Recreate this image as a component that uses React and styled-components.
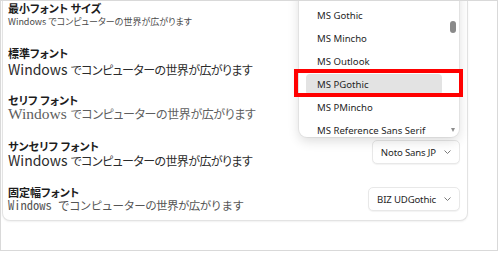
import React from 'react';
import styled, { createGlobalStyle } from 'styled-components';

const Global = createGlobalStyle`
  html, body { margin: 0; padding: 0; background: #fff; }
  body { font-family: "Noto Sans CJK JP", "Noto Sans", sans-serif; }
`;

const Frame = styled.div`
  position: relative;
  box-sizing: border-box;
  width: 498px;
  height: 251px;
  border: 1px solid #d9d9d9;
  background: #fff;
  overflow: hidden;
`;

const Card = styled.div`
  box-sizing: border-box;
  margin: 0 29px 0 1px;
  height: 220px;
  background: #fff;
  border: 1px solid #e3e3e3;
  border-top: none;
  border-radius: 0 0 8px 8px;
  box-shadow: 0 1px 2px rgba(0, 0, 0, 0.06);
  padding: 0 7px 0 5px;
  display: flex;
  flex-direction: column;
`;

const Row = styled.div`
  display: flex;
  align-items: flex-start;
  justify-content: space-between;
  margin-top: ${(p) => p.$top}px;
`;

const TextBlock = styled.div`
  display: flex;
  flex-direction: column;
`;

const Label = styled.div`
  font-family: "Noto Sans CJK JP", sans-serif;
  font-feature-settings: "palt";
  font-size: 11px;
  font-weight: 700;
  line-height: 14px;
  color: #1c1c1c;
  white-space: nowrap;
`;

const Sub = styled.div`
  font-family: "Noto Sans CJK JP", sans-serif;
  font-feature-settings: "palt";
  font-size: 9px;
  line-height: 14px;
  color: #4a4a4a;
  white-space: nowrap;
`;

const families = {
  sans: '"Noto Sans CJK JP", sans-serif',
  serif: '"Liberation Serif", "Noto Sans CJK JP", serif',
  mono: '"Noto Sans Mono CJK JP", "Liberation Mono", "Noto Sans CJK JP", monospace',
};

const colors = { sans: '#2b2b2b', serif: '#5e5e5e', mono: '#555' };
const latinSize = { sans: 14, serif: 15.5, mono: 12.5 };
const jpSize = { sans: 12, serif: 12, mono: 11.5 };
const jpSpacing = { sans: -0.6, serif: -0.4, mono: -0.6 };

const Sample = styled.div`
  font-family: ${(p) => families[p.$kind]};
  font-size: ${(p) => latinSize[p.$kind]}px;
  line-height: 12px;
  margin-top: ${(p) => p.$gap}px;
  color: ${(p) => colors[p.$kind]};
  white-space: nowrap;
`;

const Jp = styled.span`
  font-size: ${(p) => jpSize[p.$kind]}px;
  letter-spacing: ${(p) => jpSpacing[p.$kind]}px;
  font-feature-settings: ${(p) => (p.$kind === 'mono' ? 'normal' : '"palt"')};
`;

const Select = styled.div`
  display: flex;
  align-items: center;
  gap: 8px;
  box-sizing: border-box;
  height: 24px;
  margin-top: ${(p) => p.$offset}px;
  padding: 0 8px 0 8px;
  background: #fff;
  border: 1px solid #e8e8e8;
  border-radius: 5px;
  box-shadow: 0 1px 1px rgba(0, 0, 0, 0.05);
  font-family: "Noto Sans", sans-serif;
  font-size: 9.6px;
  letter-spacing: -0.15px;
  color: #1f1f1f;
  white-space: nowrap;
`;

const Chevron = () => (
  <svg width="7" height="4" viewBox="0 0 7 4" fill="none">
    <polyline points="0.5,0.5 3.5,3.5 6.5,0.5" stroke="#7a7a7a" strokeWidth="1" />
  </svg>
);

const Popup = styled.div`
  position: absolute;
  left: 298px;
  top: -20px;
  width: 160px;
  height: 156px;
  box-sizing: border-box;
  background: #fff;
  border-radius: 8px;
  box-shadow: 0 4px 12px rgba(0, 0, 0, 0.14), 0 0 0 1px rgba(0, 0, 0, 0.05);
  overflow: hidden;
  padding-top: 24px;
`;

const Item = styled.div`
  height: 21px;
  margin: 0 17px 2px 7px;
  padding-left: 11px;
  display: flex;
  align-items: center;
  border-radius: 4px;
  background: ${(p) => (p.$active ? '#e3e3e3' : 'transparent')};
  font-family: "Noto Sans", sans-serif;
  font-size: 9.6px;
  color: #1f1f1f;
  white-space: nowrap;
`;

const Thumb = styled.div`
  position: absolute;
  right: 3px;
  top: 40px;
  width: 6px;
  height: 12px;
  border-radius: 3px;
  background: #8a8a8a;
`;

const DownArrow = styled.div`
  position: absolute;
  right: 4px;
  bottom: 5px;
  width: 0;
  height: 0;
  border-left: 2.5px solid transparent;
  border-right: 2.5px solid transparent;
  border-top: 4px solid #8c8c8c;
`;

const Highlight = styled.div`
  position: absolute;
  left: 293px;
  top: 68px;
  width: 169px;
  height: 28px;
  box-sizing: border-box;
  border: 4px solid #f00;
`;

const JP_TEXT = 'でコンピューターの世界が広がります';
const SAMPLE = 'Windows ' + JP_TEXT;

const items = ['MS Gothic', 'MS Mincho', 'MS Outlook', 'MS PGothic', 'MS PMincho', 'MS Reference Sans Serif'];

const SampleText = ({ kind, gap }) => (
  <Sample $kind={kind} $gap={gap}>
    Windows <Jp $kind={kind}>{JP_TEXT}</Jp>
  </Sample>
);

export default function App() {
  return (
    <>
      <Global />
      <Frame>
        <Card>
          <Row $top={0}>
            <TextBlock>
              <Label>最小フォント サイズ</Label>
              <Sub>{SAMPLE}</Sub>
            </TextBlock>
          </Row>
          <Row $top={17}>
            <TextBlock>
              <Label>標準フォント</Label>
              <SampleText kind="sans" gap={3} />
            </TextBlock>
          </Row>
          <Row $top={17}>
            <TextBlock>
              <Label>セリフ フォント</Label>
              <SampleText kind="serif" gap={1} />
            </TextBlock>
          </Row>
          <Row $top={18}>
            <TextBlock>
              <Label>サンセリフ フォント</Label>
              <SampleText kind="sans" gap={1} />
            </TextBlock>
            <Select $offset={1}>
              Noto Sans JP
              <Chevron />
            </Select>
          </Row>
          <Row $top={18}>
            <TextBlock>
              <Label>固定幅フォント</Label>
              <SampleText kind="mono" gap={0} />
            </TextBlock>
            <Select $offset={2}>
              BIZ UDGothic
              <Chevron />
            </Select>
          </Row>
        </Card>
        <Popup>
          {items.map((it) => (
            <Item key={it} $active={it === 'MS PGothic'}>{it}</Item>
          ))}
          <Thumb />
          <DownArrow />
        </Popup>
        <Highlight />
      </Frame>
    </>
  );
}
